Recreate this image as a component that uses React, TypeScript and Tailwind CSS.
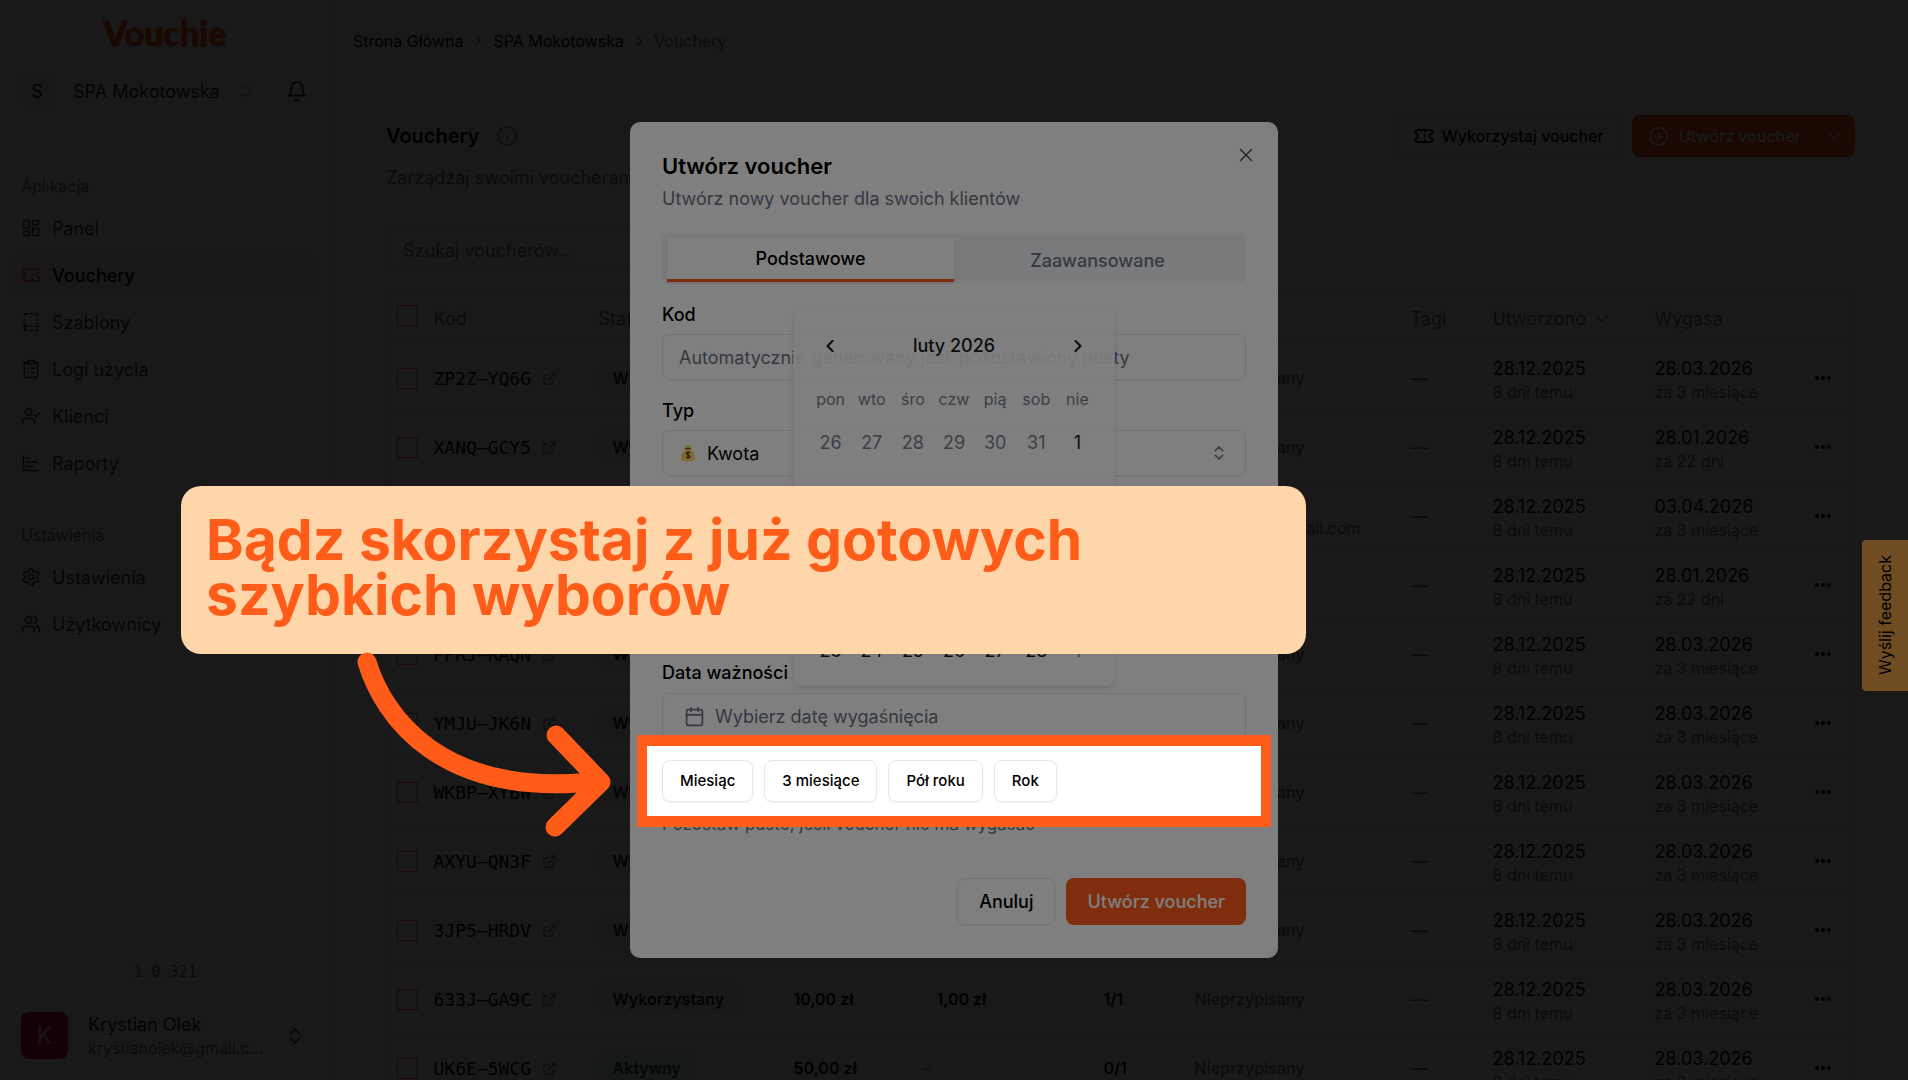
import React from 'react';
import {
    BookDashed,
    Calendar,
    ChevronDown,
    ChevronLeft,
    ChevronRight,
    ChevronsUpDown,
    CirclePlus,
    ClipboardList,
    Ellipsis,
    ExternalLink,
    Info,
    LayoutDashboard,
    Settings,
    Ticket,
    UserCheck,
    Users,
    X,
} from 'lucide-react';

interface NavItem {
    label: string;
    icon: React.ComponentType<{ className?: string }>;
    active?: boolean;
}

interface VoucherRow {
    code: string;
    status: 'Wykorzystany' | 'Aktywny';
    value?: string;
    used?: string;
    uses?: string;
    client?: string;
    email?: string;
    expires: string;
    expiresIn: string;
}

const Icon: React.FC<{ className?: string; d: string }> = ({ className, d }) => (
    <svg
        className={className}
        viewBox="0 0 24 24"
        fill="none"
        stroke="currentColor"
        strokeWidth="2"
        strokeLinecap="round"
        strokeLinejoin="round"
        aria-hidden="true"
    >
        <path d={d} />
    </svg>
);

const ReportsIcon: React.FC<{ className?: string }> = ({ className }) => (
    <Icon className={className} d="M3 3v18h18M7 16h8M7 11h12M7 6h3" />
);

const BellIcon: React.FC<{ className?: string }> = ({ className }) => (
    <Icon className={className} d="M6 8a6 6 0 0 1 12 0c0 7 3 9 3 9H3s3-2 3-9M10.300 21a1.940 1.940 0 0 0 3.400 0" />
);

const appNav: NavItem[] = [
    { label: 'Panel', icon: LayoutDashboard },
    { label: 'Vouchery', icon: Ticket, active: true },
    { label: 'Szablony', icon: BookDashed },
    { label: 'Logi użycia', icon: ClipboardList },
    { label: 'Klienci', icon: UserCheck },
    { label: 'Raporty', icon: ReportsIcon },
];

const settingsNav: NavItem[] = [
    { label: 'Ustawienia', icon: Settings },
    { label: 'Użytkownicy', icon: Users },
];

const NONE = 'Nieprzypisany';

const vouchers: VoucherRow[] = [
    { code: 'ZP2Z–YQ6G', status: 'Wykorzystany', client: NONE, expires: '28.03.2026', expiresIn: 'za 3 miesiące' },
    { code: 'XANQ–GCY5', status: 'Wykorzystany', client: NONE, expires: '28.01.2026', expiresIn: 'za 22 dni' },
    { code: '', status: 'Wykorzystany', email: '@gmail.com', expires: '03.04.2026', expiresIn: 'za 3 miesiące' },
    { code: '', status: 'Wykorzystany', expires: '28.01.2026', expiresIn: 'za 22 dni' },
    { code: 'PPRJ–RAQN', status: 'Wykorzystany', client: NONE, expires: '28.03.2026', expiresIn: 'za 3 miesiące' },
    { code: 'YMJU–JK6N', status: 'Wykorzystany', client: NONE, expires: '28.03.2026', expiresIn: 'za 3 miesiące' },
    { code: 'WKBP–XYBW', status: 'Wykorzystany', client: NONE, expires: '28.03.2026', expiresIn: 'za 3 miesiące' },
    { code: 'AXYU–QN3F', status: 'Wykorzystany', client: NONE, expires: '28.03.2026', expiresIn: 'za 3 miesiące' },
    { code: '3JP5–HRDV', status: 'Wykorzystany', client: NONE, expires: '28.03.2026', expiresIn: 'za 3 miesiące' },
    { code: '633J–GA9C', status: 'Wykorzystany', value: '10,00 zł', used: '1,00 zł', uses: '1/1', client: NONE, expires: '28.03.2026', expiresIn: 'za 3 miesiące' },
    { code: 'UK6E–5WCG', status: 'Aktywny', value: '50,00 zł', uses: '0/1', client: NONE, expires: '28.03.2026', expiresIn: 'za 3 miesiące' },
];

const weekdays = ['pon', 'wto', 'śro', 'czw', 'pią', 'sob', 'nie'];

const weeks = [
    [26, 27, 28, 29, 30, 31, 1],
    [2, 3, 4, 5, 6, 7, 8],
    [9, 10, 11, 12, 13, 14, 15],
    [16, 17, 18, 19, 20, 21, 22],
    [23, 24, 25, 26, 27, 28, 1],
];

const quickPicks = ['Miesiąc', '3 miesiące', 'Pół roku', 'Rok'];

const NavList: React.FC<{ title: string; items: NavItem[] }> = ({ title, items }) => (
    <nav className="flex flex-col px-3" aria-label={title}>
        <div className="flex h-9 items-center px-[9px] text-[16px] text-gray-500">{title}</div>
        <ul className="mt-1 flex flex-col gap-[7px]">
            {items.map(({ label, icon: ItemIcon, active }) => (
                <li key={label}>
                    <a
                        href="#"
                        className={
                            active
                                ? 'flex h-10 items-center gap-[11px] rounded-lg bg-gray-100 px-[9px] text-[18px] font-medium text-black'
                                : 'flex h-10 items-center gap-[11px] rounded-lg px-[9px] text-[18px] text-gray-700'
                        }
                    >
                        <ItemIcon className={active ? 'size-5 text-[#ff5c1a]' : 'size-5'} />
                        {label}
                    </a>
                </li>
            ))}
        </ul>
    </nav>
);

const Sidebar: React.FC = () => (
    <aside className="flex w-[331px] shrink-0 flex-col border-r border-gray-100">
        <div className="flex h-[69px] justify-center pt-[12px]">
            <svg width="160" height="44" viewBox="0 0 160 44" role="img" aria-label="Vouchie">
                <text
                    x="80"
                    y="34"
                    textAnchor="middle"
                    fill="#ff5c1a"
                    stroke="#ff5c1a"
                    strokeWidth="1"
                    strokeLinejoin="round"
                    className="font-['Lato',sans-serif] text-[34px] font-black"
                >
                    Vouchie
                </text>
            </svg>
        </div>
        <div className="flex h-11 items-center pr-[22px] pl-[21px]">
            <span className="flex size-8 items-center justify-center rounded-md bg-gray-100 text-[18px]">S</span>
            <button className="ml-5 flex items-center gap-4 text-[18px] text-gray-800">
                SPA Mokotowska
                <ChevronsUpDown className="size-[18px] text-gray-400" />
            </button>
            <button className="ml-auto" aria-label="Powiadomienia">
                <BellIcon className="size-[22px] text-gray-800" />
            </button>
        </div>
        <div className="mt-[55px]">
            <NavList title="Aplikacja" items={appNav} />
        </div>
        <div className="mt-[34px]">
            <NavList title="Ustawienia" items={settingsNav} />
        </div>
        <div className="mt-auto text-center font-['DejaVu_Sans_Mono',monospace] text-[15px] text-gray-500">1.0.321</div>
        <button className="mt-[22px] mb-[14px] flex items-center py-[7px] pr-[25px] pl-[21px] text-left">
            <span className="flex size-[47px] items-center justify-center rounded-lg bg-pink-700 text-[24px] text-gray-300">K</span>
            <span className="ml-5 flex min-w-0 flex-col">
                <span className="text-[18px] leading-6 text-gray-800">Krystian Olek</span>
                <span className="text-[16px] leading-[22px] text-gray-500">krystianolek@gmail.c...</span>
            </span>
            <ChevronsUpDown className="ml-auto size-5 text-gray-700" />
        </button>
    </aside>
);

const Badge: React.FC<{ className?: string; children: React.ReactNode }> = ({ className = '', children }) => (
    <span className={`inline-flex h-8 items-center rounded-lg px-[14px] text-[16px] ${className}`}>{children}</span>
);

const Checkbox: React.FC<{ label: string }> = ({ label }) => (
    <input
        type="checkbox"
        aria-label={label}
        className="ml-[10px] block size-[21px] appearance-none border border-[#ff5c1a]"
    />
);

const VoucherTable: React.FC = () => (
    <table className="w-full table-fixed border border-gray-200 text-left">
        <colgroup>
            <col className="w-[47px]" />
            <col className="w-[165px]" />
            <col className="w-[181px]" />
            <col className="w-[143px]" />
            <col className="w-[167px]" />
            <col className="w-[91px]" />
            <col />
            <col className="w-[82px]" />
            <col className="w-[162px]" />
            <col className="w-[158px]" />
            <col className="w-[42px]" />
        </colgroup>
        <thead>
            <tr className="h-[50px] border-b border-gray-200 text-[18px] text-gray-500">
                <th className="pb-1.5 font-normal">
                    <Checkbox label="Zaznacz wszystkie" />
                </th>
                <th className="font-normal">Kod</th>
                <th className="font-normal">Status</th>
                <th />
                <th />
                <th />
                <th />
                <th className="font-normal">Tagi</th>
                <th className="font-normal">
                    <button className="flex items-center gap-[6px]">
                        Utworzono
                        <ChevronDown className="size-5" />
                    </button>
                </th>
                <th className="font-normal">Wygasa</th>
                <th />
            </tr>
        </thead>
        <tbody>
            {vouchers.map((v, i) => (
                <tr key={i} className="h-[69px] border-b border-gray-100">
                    <td>
                        <Checkbox label={`Zaznacz ${v.code}`} />
                    </td>
                    <td>
                        <a href="#" className="flex items-center gap-[11px] font-['DejaVu_Sans_Mono',monospace] text-[18px] text-black">
                            {v.code}
                            <ExternalLink className="size-[15px] text-gray-500" />
                        </a>
                    </td>
                    <td>
                        <Badge
                            className={
                                v.status === 'Aktywny'
                                    ? 'bg-emerald-100 font-semibold text-emerald-800'
                                    : 'bg-gray-100 font-semibold text-gray-900'
                            }
                        >
                            {v.status}
                        </Badge>
                    </td>
                    <td>{v.value && <Badge className="font-semibold">{v.value}</Badge>}</td>
                    <td className="text-gray-500">{v.used ? <Badge className="font-semibold text-black">{v.used}</Badge> : v.value && '–'}</td>
                    <td>{v.uses && <Badge className="font-semibold">{v.uses}</Badge>}</td>
                    <td>
                        {v.client && <Badge className="font-medium text-gray-500">{v.client}</Badge>}
                        {v.email && <div className="pt-6 pr-[50px] text-right text-[16px] text-gray-500">{v.email}</div>}
                    </td>
                    <td className="text-[18px] text-gray-500">—</td>
                    <td className="pt-1">
                        <div className="text-[18px] leading-6">28.12.2025</div>
                        <div className="text-[16px] leading-[22px] text-gray-500">8 dni temu</div>
                    </td>
                    <td className="pt-1">
                        <div className="text-[18px] leading-6">{v.expires}</div>
                        <div className="text-[16px] leading-[22px] text-gray-500">{v.expiresIn}</div>
                    </td>
                    <td>
                        <button aria-label="Więcej" className="block">
                            <Ellipsis className="size-5" strokeWidth={3} />
                        </button>
                    </td>
                </tr>
            ))}
        </tbody>
    </table>
);

const VouchersPage: React.FC = () => (
    <main className="min-w-0 flex-1">
        <nav aria-label="Breadcrumb" className="flex h-[82px] items-center gap-[7px] pl-[22px] text-[16px]">
            <a href="#">Strona Główna</a>
            <ChevronRight className="size-4 text-gray-500" />
            <a href="#">SPA Mokotowska</a>
            <ChevronRight className="size-4 text-gray-500" />
            <span className="text-gray-500">Vouchery</span>
        </nav>
        <div className="pr-[53px] pl-[55px]">
            <div className="mt-[33px] flex h-[42px] items-center">
                <h1 className="text-[20px] font-semibold">Vouchery</h1>
                <Info className="ml-4 size-[22px] text-gray-500" strokeWidth={1.5} />
                <button className="ml-auto flex h-[42px] items-center gap-2 rounded-lg border border-gray-200 px-4 text-[16px] font-medium">
                    <Ticket className="size-5" />
                    Wykorzystaj voucher
                </button>
                <div className="ml-[11px] flex h-[42px] items-center rounded-lg bg-[#ff5c1a] text-[16px] font-medium text-white">
                    <button className="flex items-center gap-[10px] pl-4">
                        <CirclePlus className="size-[21px]" />
                        Utwórz voucher
                    </button>
                    <button className="pr-[11px] pl-[23px]" aria-label="Więcej opcji">
                        <ChevronDown className="size-5" />
                    </button>
                </div>
            </div>
            <p className="mt-2 text-[18px] leading-[26px] text-gray-500">Zarządzaj swoimi voucherami</p>
            <input
                type="search"
                aria-label="Szukaj"
                placeholder="Szukaj voucherów..."
                className="mt-[39px] mb-[22px] block h-[41px] w-[420px] rounded-lg border border-gray-200 px-4 text-[18px] placeholder:text-gray-500"
            />
            <VoucherTable />
        </div>
    </main>
);

const CalendarPopover: React.FC = () => (
    <div className="absolute top-[186px] left-1/2 z-20 h-[378px] w-[322px] -translate-x-1/2 rounded-lg border border-gray-100 bg-white px-4 opacity-90 shadow-md">
        <div className="flex h-[73px] items-center justify-between px-[10px] text-[18px] font-medium">
            <button aria-label="Poprzedni miesiąc">
                <ChevronLeft className="size-5" strokeWidth={2.5} />
            </button>
            luty 2026
            <button aria-label="Następny miesiąc">
                <ChevronRight className="size-5" strokeWidth={2.5} />
            </button>
        </div>
        <table className="w-full table-fixed text-center text-gray-500">
            <thead>
                <tr className="h-[34px] text-[16px]">
                    {weekdays.map((d) => (
                        <th key={d} className="font-normal">
                            {d}
                        </th>
                    ))}
                </tr>
            </thead>
            <tbody>
                {weeks.map((week, w) => (
                    <tr key={w} className="h-[52px] text-[18px]">
                        {week.map((day, d) => {
                            const outside = (w === 0 && day > 20) || (w === 4 && day < 20);
                            return (
                                <td key={d} className={outside ? '' : 'text-black'}>
                                    <button>{day}</button>
                                </td>
                            );
                        })}
                    </tr>
                ))}
            </tbody>
        </table>
    </div>
);

// Dims everything around the row it is placed in
const Spotlight: React.FC = () => (
    <div className="pointer-events-none absolute -inset-[25px] z-30 border-x-[10px] border-y-[11px] border-[#ff5c1a] shadow-[0_0_0_9999px_rgb(0_0_0/0.5)]" />
);

const MoneyBag: React.FC = () => (
    <svg className="absolute top-[13px] left-[18px] h-[19px] w-4" viewBox="0 0 16 18" aria-hidden="true">
        <path d="M5 1l2 1 1-1 1 1 2-1-1.500 4h-3z" fill="#fdd663" />
        <path d="M6 5h4c2 2 5 5 5 9 0 3-2 4-7 4s-7-1-7-4c0-4 3-7 5-9z" fill="#fdd663" />
        <path d="M5.500 5h5" stroke="#8d5a2b" strokeWidth="1.500" strokeLinecap="round" />
        <path d="M10 9.500c-.5-1-3.800-1.200-3.800.6 0 1.700 3.800 1 3.800 2.900 0 1.700-3.500 1.700-4 .4M8 7.800v7.400" stroke="#4e342e" strokeWidth="1.200" fill="none" />
    </svg>
);

const CreateVoucherDialog: React.FC = () => (
    <div className="fixed inset-0 z-20 flex items-center justify-center">
        <div
            role="dialog"
            aria-labelledby="dialog-title"
            className="relative flex h-[836px] w-[648px] flex-col rounded-[10px] bg-white px-8"
        >
            <h2 id="dialog-title" className="mt-[29px] text-[22px] leading-[30px] font-semibold">
                Utwórz voucher
            </h2>
            <p className="mt-[5px] text-[18px] leading-[26px] text-gray-500">Utwórz nowy voucher dla swoich klientów</p>
            <button aria-label="Zamknij" className="absolute top-[22px] right-[21px]">
                <X className="size-[22px] text-gray-700" strokeWidth={1.5} />
            </button>

            <div role="tablist" className="mt-[21px] flex h-[50px] rounded-md bg-slate-100 px-[5px] pt-[5px] pb-px">
                <button role="tab" aria-selected="true" className="flex-1 border-b-[3px] border-[#ff5c1a] bg-white text-[18px] font-medium shadow-sm">
                    Podstawowe
                </button>
                <button role="tab" aria-selected="false" className="flex-1 text-[18px] font-medium text-gray-500">
                    Zaawansowane
                </button>
            </div>

            <label htmlFor="code" className="mt-[18px] text-[18px] leading-7 font-medium">
                Kod
            </label>
            <input
                id="code"
                placeholder="Automatycznie generowany jeśli pozostawiony pusty"
                className="mt-[5px] h-[46px] shrink-0 rounded-lg border border-gray-200 px-4 text-[18px] shadow-xs placeholder:text-gray-500"
            />

            <label htmlFor="type" className="mt-[17px] text-[18px] leading-7 font-medium">
                Typ
            </label>
            <div className="relative mt-[5px]">
                <MoneyBag />
                <select id="type" className="h-[46px] w-full appearance-none rounded-lg border border-gray-200 pl-[44px] text-[18px] shadow-xs">
                    <option>Kwota</option>
                </select>
                <ChevronsUpDown className="absolute top-[14px] right-[18px] size-[18px] text-gray-500" />
            </div>

            <label htmlFor="expiry" className="mt-auto text-[18px] leading-7 font-medium">
                Data ważności
            </label>
            <button
                id="expiry"
                className="mt-[6px] flex h-[47px] shrink-0 items-center gap-[10px] rounded-lg border border-gray-200 px-[21px] text-[18px] text-gray-500 shadow-xs"
            >
                <Calendar className="size-[21px]" />
                Wybierz datę wygaśnięcia
            </button>

            <div className="relative mt-5 flex gap-[11px]">
                {quickPicks.map((label) => (
                    <button key={label} className="h-[42px] rounded-lg border border-gray-200 px-[17px] text-[15px] font-medium shadow-xs">
                        {label}
                    </button>
                ))}
                <Spotlight />
            </div>

            <p className="mt-[11px] text-[17px] leading-[22px] text-gray-500">Pozostaw puste, jeśli voucher nie ma wygasać</p>

            <div className="mt-[43px] mb-[33px] flex justify-end gap-[11px] text-[18px] font-medium">
                <button className="h-[47px] rounded-lg border border-gray-200 px-[21px] shadow-xs">Anuluj</button>
                <button className="h-[47px] rounded-lg bg-[#ff5c1a] px-[21px] text-white">Utwórz voucher</button>
            </div>

            <CalendarPopover />
        </div>
    </div>
);

const Callout: React.FC = () => (
    <div className="pointer-events-none fixed inset-0 z-40">
        <div className="absolute top-[486px] left-[181px] h-[168px] w-[1125px] rounded-[20px] bg-[#ffd6a9] px-[25px] pt-[26px]">
            <p className="text-[57px] leading-[55px] font-bold text-[#ff5c1a]">
                Bądz skorzystaj z już gotowych
                <br />
                szybkich wyborów
            </p>
        </div>
        <svg className="absolute top-[640px] left-[350px]" width="270" height="210" viewBox="350 640 270 210" fill="none" aria-hidden="true">
            <path
                d="M367 662C383 715 440 800 600 781M556 735L601 782L555 827"
                stroke="#ff5c1a"
                strokeWidth="19"
                strokeLinecap="round"
                strokeLinejoin="round"
            />
        </svg>
    </div>
);

export default function App() {
    return (
        <div className="relative flex h-screen overflow-hidden bg-white font-['Inter',sans-serif] text-black">
            <Sidebar />
            <VouchersPage />
            <div className="fixed inset-0 z-10 bg-black/80" />
            <button className="fixed top-[540px] right-0 z-10 flex h-[151px] w-[46px] items-center justify-center rounded-l bg-[#e09845] text-[16px] [writing-mode:sideways-lr]">
                Wyślij feedback
            </button>
            <CreateVoucherDialog />
            <Callout />
        </div>
    );
}
